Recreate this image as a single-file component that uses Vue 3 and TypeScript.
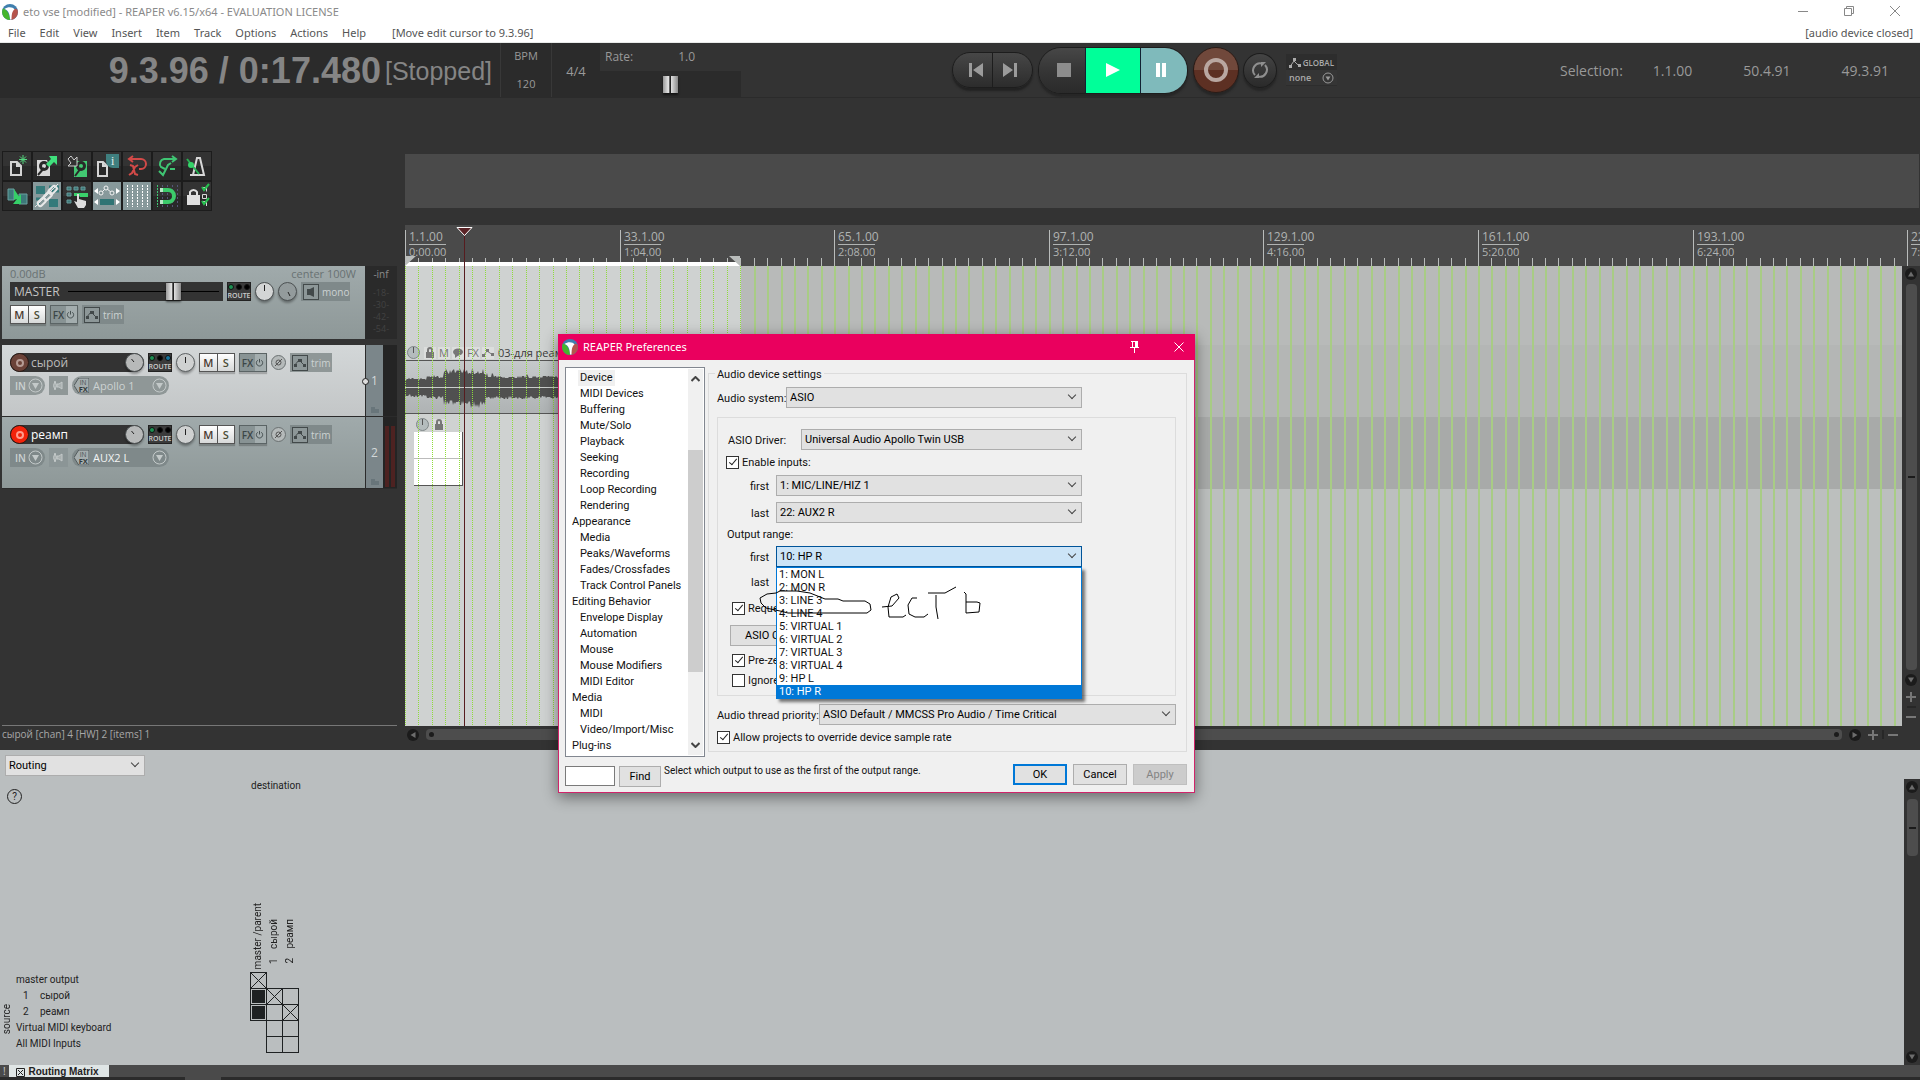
<script setup lang="ts">
import { ref } from 'vue'

const menus = ['File', 'Edit', 'View', 'Insert', 'Item', 'Track', 'Options', 'Actions', 'Help']

interface Track {
  id: number
  name: string
  input: string
  armed: boolean
  selected: boolean
  lights: string[]
}

const tracks: Track[] = [
  { id: 1, name: 'сырой', input: 'Apollo 1', armed: false, selected: true, lights: ['#1d8f52', '#000', '#17759c'] },
  { id: 2, name: 'реамп', input: 'AUX2 L', armed: true, selected: false, lights: ['#1d8f52', '#000', '#000'] }
]

const meterMarks = ['-18-', '-30-', '-42-', '-54-']

/* timeline: 2 bars per minor division, 32 bars per major one */
const BAR_PX = 214.6 / 32
const selectionEnd = 335
const gridLines = Array.from({ length: 113 }, (_, i) => Math.round(i * 2 * BAR_PX))
const majors = Array.from({ length: 8 }, (_, i) => {
  const seconds = i * 64
  return {
    x: Math.round(i * 32 * BAR_PX),
    bar: `${i * 32 + 1}.1.00`,
    time: `${Math.floor(seconds / 60)}:${String(seconds % 60).padStart(2, '0')}.00`
  }
})

function wavePath(): string {
  const top: string[] = []
  const bottom: string[] = []
  let seed = 7
  const rnd = () => {
    seed = (seed * 16807) % 2147483647
    return seed / 2147483647
  }
  for (let x = 0; x <= 335; x++) {
    const loud = x > 38 && x < 81
    const base = x < 22 ? 7 : loud ? 13 : 9
    const up = base + rnd() * (loud ? 5 : 2) + (rnd() > 0.93 ? 3 : 0)
    const down = base + rnd() * (loud ? 5 : 3) + (x > 65 && x < 79 ? 4 * rnd() : 0)
    top.push(`${x} ${Math.round(26 - up)}`)
    bottom.unshift(`${x} ${Math.round(26 + down)}`)
  }
  return `M${top.join('L')}L${bottom.join('L')}Z`
}
const wave = wavePath()

interface Page { label: string; top?: boolean; current?: boolean }
const pages: Page[] = [
  { label: 'Device', current: true },
  { label: 'MIDI Devices' },
  { label: 'Buffering' },
  { label: 'Mute/Solo' },
  { label: 'Playback' },
  { label: 'Seeking' },
  { label: 'Recording' },
  { label: 'Loop Recording' },
  { label: 'Rendering' },
  { label: 'Appearance', top: true },
  { label: 'Media' },
  { label: 'Peaks/Waveforms' },
  { label: 'Fades/Crossfades' },
  { label: 'Track Control Panels' },
  { label: 'Editing Behavior', top: true },
  { label: 'Envelope Display' },
  { label: 'Automation' },
  { label: 'Mouse' },
  { label: 'Mouse Modifiers' },
  { label: 'MIDI Editor' },
  { label: 'Media', top: true },
  { label: 'MIDI' },
  { label: 'Video/Import/Misc' },
  { label: 'Plug-ins', top: true }
]

const outputs = [
  '1: MON L', '2: MON R', '3: LINE 3', '4: LINE 4', '5: VIRTUAL 1',
  '6: VIRTUAL 2', '7: VIRTUAL 3', '8: VIRTUAL 4', '9: HP L', '10: HP R'
]
const output = ref('10: HP R')
const enableInputs = ref(true)
const requestRate = ref(true)
const preZero = ref(true)
const ignoreReset = ref(false)
const allowOverride = ref(true)
const rate = ref(50)
const masterVolume = ref(72)

type Cell = 'none' | 'empty' | 'cross' | 'full'
const matrix: { no?: string; label: string; cells: Cell[] }[] = [
  { label: 'master output', cells: ['cross', 'none', 'none'] },
  { no: '1', label: 'сырой', cells: ['full', 'cross', 'empty'] },
  { no: '2', label: 'реамп', cells: ['full', 'empty', 'cross'] },
  { label: 'Virtual MIDI keyboard', cells: ['none', 'empty', 'empty'] },
  { label: 'All MIDI Inputs', cells: ['none', 'empty', 'empty'] }
]
</script>

<template>
  <div class="app">
    <header class="titlebar">
      <svg class="logo" viewBox="0 0 16 16">
        <circle cx="8" cy="8" r="8" fill="#3f7fae" />
        <path d="M1 4.500C4 5 7.500 9 8 16A8 8 0 0 1 1 4.500Z" fill="#45b52c" />
        <path d="M11.500 5.500C13 4.500 15 4.500 15.700 6.500A8 8 0 0 1 9 16C9 11 9.500 8 11.500 5.500Z" fill="#b5544c" />
        <path d="M2.500 5C6 2.500 11 3 12.500 5.500C10.500 7 9.500 9.500 9.500 15.500L8 15.500C8 10 6 6 2.500 5Z" fill="#fff" />
      </svg>
      <span class="title">eto vse [modified] - REAPER v6.15/x64 - EVALUATION LICENSE</span>
      <div class="winbtns">
        <button aria-label="Minimize"><svg viewBox="0 0 12 12"><path d="M1 6.500H11" /></svg></button>
        <button aria-label="Restore"><svg viewBox="0 0 12 12"><path d="M1.500 3.500H8.500V10.500H1.500ZM3.500 3.500V1.500H10.500V8.500H8.500" /></svg></button>
        <button aria-label="Close"><svg viewBox="0 0 12 12"><path d="M1 1L11 11M11 1L1 11" /></svg></button>
      </div>
    </header>

    <nav class="menubar">
      <a v-for="m in menus" :key="m" href="#">{{ m }}</a>
      <span class="last-action">[Move edit cursor to 9.3.96]</span>
      <span class="device-state">[audio device closed]</span>
    </nav>

    <section class="transport">
      <div class="clock"><b>9.3.96 / 0:17.480</b><span>[Stopped]</span></div>
      <div class="bpm"><span>BPM</span><span>120</span></div>
      <div class="sig">4/4</div>
      <div class="rate">
        <label for="rate"><span>Rate:</span><span>1.0</span></label>
        <input id="rate" v-model="rate" type="range" class="fader" />
      </div>
      <div class="buttons">
        <div class="seek">
          <button aria-label="Go to start"><svg viewBox="0 0 14 14"><path d="M0 0H3V14H0ZM14 0V14L4 7Z" fill="#9b9b9b" /></svg></button>
          <button aria-label="Go to end"><svg viewBox="0 0 14 14"><path d="M14 0H11V14H14ZM0 0V14L10 7Z" fill="#9b9b9b" /></svg></button>
        </div>
        <div class="play-group">
          <button class="stop" aria-label="Stop"><svg viewBox="0 0 14 14"><path d="M0 0H14V14H0Z" fill="#8d8d8d" /></svg></button>
          <button class="play" aria-label="Play"><svg viewBox="0 0 14 14"><path d="M0 0V14L14 7Z" fill="#fff" /></svg></button>
          <button class="pause" aria-label="Pause"><svg viewBox="0 0 14 14"><path d="M2 0H6V14H2ZM8 0H12V14H8Z" fill="#fff" /></svg></button>
        </div>
        <button class="record" aria-label="Record"><i></i></button>
        <button class="repeat" aria-label="Repeat">
          <svg viewBox="0 0 18 18" fill="none" stroke="#8f8f8f" stroke-width="2"><path d="M11 2.500A7 7 0 0 0 4 14M7 15.500A7 7 0 0 0 14 4" /><path d="M3 17H8V12ZM15 1H10V6Z" fill="#8f8f8f" stroke="none" /></svg>
        </button>
        <button class="global">
          <span class="global-top"><svg viewBox="0 0 12 10"><path d="M1 8.500L5 3L8 6L11 8.500" fill="none" stroke="#aaa" /><path d="M0 7H3V10H0ZM4 0H7V3H4ZM9 6H12V9H9Z" fill="#aaa" /></svg>GLOBAL</span>
          <span class="global-mode">none<svg viewBox="0 0 12 12"><circle cx="6" cy="6" r="5" fill="none" stroke="#999" /><path d="M3.500 4.500H8.500L6 8.500Z" fill="#999" /></svg></span>
        </button>
      </div>
      <div class="selection"><span>Selection:</span><span>1.1.00</span><span>50.4.91</span><span>49.3.91</span></div>
    </section>

    <main class="workspace">
      <aside class="panel">
        <div class="toolbar">
          <button aria-label="New project"><svg viewBox="0 0 30 30"><path d="M9 11H15L19 15V24H9ZM15 11V15H19" fill="none" stroke="#d5d5d5" stroke-width="2" /><path d="M21 4V13M17 8.500H25M18 5.500L24 11.500M24 5.500L18 11.500" stroke="#54d67f" /></svg></button>
          <button aria-label="Open project"><svg viewBox="0 0 30 30"><path d="M5 9H15L17 15H18V25H5Z" fill="#d8d8d8" /><circle cx="12" cy="15" r="5" fill="#292929" /><circle cx="12" cy="15" r="2" fill="#d8d8d8" /><path d="M6 24L12 17" stroke="#292929" stroke-width="2" /><path d="M17 5H25V14L22 11L17 16L14 13L19 8Z" fill="#3fe07c" /></svg></button>
          <button aria-label="Save project"><svg viewBox="0 0 30 30"><path d="M12 10H25V26H12Z" fill="#42c972" /><circle cx="19" cy="15" r="5" fill="#292929" /><circle cx="19" cy="15" r="2" fill="#42c972" /><path d="M13 25L19 17" stroke="#292929" stroke-width="2" /><path d="M6 8L9 5L12 9L15 6V15H6L9 12Z" fill="#333" stroke="#ccc" /></svg></button>
          <button aria-label="Project settings"><svg viewBox="0 0 30 30"><path d="M6 11H11L15 15V25H6ZM11 11V15H15" fill="none" stroke="#d5d5d5" stroke-width="2" /><path d="M14 3H27V17H21A7 7 0 0 1 14 10Z" fill="#3f7f7f" /><text x="19" y="14" font-size="12" font-family="Liberation Serif" fill="#e8f0f0">i</text></svg></button>
          <button aria-label="Undo"><svg viewBox="0 0 30 30" fill="none" stroke="#d24a48" stroke-width="2"><path d="M8 8H19A5 5 0 0 1 19 18H17M11 5L7 8L11 11" /><path d="M8 14L11 15L13 23L16 24M16 14L13 16L10 22L7 24" /></svg></button>
          <button aria-label="Redo"><svg viewBox="0 0 30 30" fill="none" stroke="#3fc573" stroke-width="2"><path d="M24 8H12A5 5 0 0 0 9 16L13 18M20 5L24 8L20 11M18 18H23" /><path d="M7 20L11 24L16 14L19 12" /></svg></button>
          <button aria-label="Metronome"><svg viewBox="0 0 30 30"><path d="M11 24L15 7H18L22 24ZM8 24H14" fill="none" stroke="#d8d8d8" stroke-width="2" /><path d="M5 8L17 23" stroke="#27b354" stroke-width="2" /><circle cx="9" cy="14" r="3" fill="#34d469" /></svg></button>
          <button aria-label="Crossfade"><svg viewBox="0 0 30 30"><path d="M6 8H12V19H6Z" fill="#3d7979" stroke="#6aa0a0" /><path d="M17 13H25V23H17Z" fill="#3d7979" stroke="#6aa0a0" /><path d="M12 8L18 17L12 19ZM19 13V23H11Z" fill="#35cf68" /></svg></button>
          <button class="on" aria-label="Item grouping"><svg viewBox="0 0 30 30"><path d="M4 5H13V13H4ZM17 18H26V26H17Z" fill="#347a7a" /><path d="M17 6H27M20 10H27M4 18H10M4 23H8" stroke="#347a7a" stroke-width="3" /><g fill="none" stroke="#e8e8e8" stroke-width="2"><rect x="-4" y="-2" width="9" height="5" rx="2" transform="translate(20 9) rotate(-45)" /><rect x="-4" y="-2" width="9" height="5" rx="2" transform="translate(15 15) rotate(-45)" /><rect x="-4" y="-2" width="9" height="5" rx="2" transform="translate(9 21) rotate(-45)" /></g><path d="M3 26L26 3" stroke="#e8e8e8" /></svg></button>
          <button aria-label="Ripple editing"><svg viewBox="0 0 30 30"><path d="M5 6H9V9H5ZM12 6H16V9H12ZM19 6H23V9H19ZM5 12H9V15H5ZM5 19H9V22H5Z" fill="#3d7979" stroke="#679b9b" /><path d="M12 12H16V15H12ZM15 12H26V16H18Z" fill="#3ad06b" /><path d="M15 13H17V18L24 20V24L22 27H16L12 20L15 21Z" fill="#ddd" /></svg></button>
          <button class="on" aria-label="Move envelopes with items"><svg viewBox="0 0 30 30"><path d="M9 12L14 7L20 12" fill="none" stroke="#f4f4f4" /><g fill="#7f9293" stroke="#f4f4f4"><circle cx="9" cy="12" r="2" /><circle cx="14" cy="7" r="2" /><circle cx="20" cy="12" r="2" /></g><path d="M6 7V13L2 10ZM24 7V13L28 10ZM6 18V24L2 21ZM24 18V24L28 21Z" fill="#fff" /><path d="M8 18H22V24H8Z" fill="#2f7474" /></svg></button>
          <button class="on" aria-label="Grid lines"><svg viewBox="0 0 30 30"><path d="M5.500 4V26M10.500 4V26M15.500 4V26M20.500 4V26M25.500 4V26" stroke="#fff" stroke-dasharray="2 1" /></svg></button>
          <button aria-label="Snapping"><svg viewBox="0 0 30 30"><path d="M5.500 4V26" stroke="#3fc573" stroke-dasharray="2 1" /><path d="M10.500 4V26M15.500 4V26M20.500 4V26M25.500 4V26" stroke="#557" stroke-dasharray="2 2" /><path d="M9 9H16A6 6 0 0 1 16 21H9" fill="none" stroke="#3ccb6b" stroke-width="4" /><path d="M8 7H11V11H8ZM8 19H11V23H8Z" fill="#b9e8c6" /></svg></button>
          <button aria-label="Locking"><svg viewBox="0 0 30 30"><path d="M5 14H18V24H5Z" fill="#e0e0e0" /><path d="M8 14V11A4 4 0 0 1 15 11V14" fill="none" stroke="#e0e0e0" stroke-width="2" /><path d="M20.500 6.500H24.500V10.500M20.500 13.500H24.500V17.500H20.500ZM20.500 20.500H24.500V25" fill="none" stroke="#d8d8d8" /><path d="M20 6L22 9L27 3M20 20L22 23L27 17" fill="none" stroke="#27c04f" stroke-width="2" /></svg></button>
        </div>

        <div class="master">
          <div class="tcp">
            <div class="db"><span>0.00dB</span><span>center 100W</span></div>
            <div class="row">
              <div class="master-name"><label for="mvol">MASTER</label><input id="mvol" v-model="masterVolume" type="range" class="fader line" /></div>
              <button class="route"><span><i style="background: #1d8f52"></i><i></i><i></i></span>ROUTE</button>
              <svg class="knob" viewBox="0 0 19 19"><circle cx="9.500" cy="9.500" r="9" fill="#d3d5d5" stroke="#4c5152" /><path d="M9.500 3V9" stroke="#222" /></svg>
              <svg class="knob" viewBox="0 0 19 19"><circle cx="9.500" cy="9.500" r="9" fill="#939b9c" stroke="#4c5152" /><path d="M10 10L12 14" stroke="#222" /></svg>
              <button class="tag mono"><svg viewBox="0 0 16 16"><rect x="0.500" y="0.500" width="15" height="15" fill="#8d9798" stroke="#42494a" /><path d="M4 5H7L11 3V13L7 11H4Z" fill="#42494a" /></svg>mono</button>
            </div>
            <div class="row">
              <div class="ms"><button>M</button><button>S</button></div>
              <button class="fx"><b>FX</b><svg viewBox="0 0 10 10"><path d="M3 2.500A3.500 3.500 0 1 0 7 2.500M5 1V5" /></svg></button>
              <button class="tag"><svg viewBox="0 0 16 16"><rect x="0.500" y="0.500" width="15" height="15" fill="#8d9798" stroke="#42494a" /><path d="M2 11L7 5L13 11" fill="none" stroke="#42494a" /><path d="M2 9H5V12H2ZM6 4H10V7H6ZM11 9H14V12H11Z" fill="#42494a" /></svg>trim</button>
            </div>
          </div>
          <div class="meter"><span>-inf</span><span v-for="m in meterMarks" :key="m" class="mark">{{ m }}</span></div>
        </div>

        <div v-for="t in tracks" :key="t.id" class="track" :class="{ selected: t.selected }">
          <div class="tcp">
            <div class="row">
              <div class="name" :class="{ armed: t.armed }">
                <button class="arm" aria-label="Record arm"><i></i></button>
                <span>{{ t.name }}</span>
                <svg class="knob" viewBox="0 0 19 19"><circle cx="9.500" cy="9.500" r="9" fill="#b7b9b9" stroke="#4c5152" /><path d="M6.500 6L9 9" stroke="#222" /></svg>
              </div>
              <button class="route"><span><i v-for="(c, n) in t.lights" :key="n" :style="{ background: c }"></i></span>ROUTE</button>
              <svg class="knob" viewBox="0 0 19 19"><circle cx="9.500" cy="9.500" r="9" fill="#cfd1d1" stroke="#5c6162" /><path d="M9.500 4V10" stroke="#222" /></svg>
              <div class="ms"><button>M</button><button>S</button></div>
              <button class="fx"><b>FX</b><svg viewBox="0 0 10 10"><path d="M3 2.500A3.500 3.500 0 1 0 7 2.500M5 1V5" /></svg></button>
              <button class="phase" aria-label="Phase"><svg viewBox="0 0 15 15"><circle cx="7.500" cy="7.500" r="7" fill="#b5baba" stroke="#6a7071" /><circle cx="7.500" cy="7.500" r="2.500" fill="none" stroke="#555" /><path d="M4 11L11 4" stroke="#555" /></svg></button>
              <button class="tag"><svg viewBox="0 0 16 16"><rect x="0.500" y="0.500" width="15" height="15" fill="#8d9798" stroke="#42494a" /><path d="M2 11L7 5L13 11" fill="none" stroke="#42494a" /><path d="M2 9H5V12H2ZM6 4H10V7H6ZM11 9H14V12H11Z" fill="#42494a" /></svg>trim</button>
            </div>
            <div class="row">
              <button class="pill">IN<svg viewBox="0 0 15 15"><circle cx="7.500" cy="7.500" r="6.500" fill="none" stroke="#c3c9c9" /><path d="M4 5H11L7.500 11Z" fill="#c3c9c9" /></svg></button>
              <button class="monitor" aria-label="Monitor"><svg viewBox="0 0 19 19"><path d="M6 5Q9 9.500 6 14Q3 9.500 6 5ZM8 8H10L13 6V13L10 11H8Z" fill="#a9b0b0" stroke="#c3c9c9" /></svg></button>
              <button class="pill input">
                <svg class="infx" viewBox="0 0 16 16"><path d="M5 0H16V16H5L0 8Z" fill="#a5adae" stroke="#50595a" /><text x="6" y="7" font-size="7" font-family="Open Sans" fill="#485051">IN</text><text x="5" y="15" font-size="8" font-weight="700" font-family="Open Sans" fill="#333b3c">FX</text></svg>
                <span>{{ t.input }}</span>
                <svg viewBox="0 0 15 15"><circle cx="7.500" cy="7.500" r="6.500" fill="none" stroke="#c3c9c9" /><path d="M4 5H11L7.500 11Z" fill="#c3c9c9" /></svg>
              </button>
            </div>
          </div>
          <div class="number"><i v-if="t.selected" class="env-dot"></i>{{ t.id }}<svg class="folder" viewBox="0 0 8 6"><path d="M0 0H4V2H8V6H0Z" fill="#68757a" /></svg></div>
          <div class="vu" :class="{ hot: t.armed }"><i></i><i></i></div>
        </div>

        <footer class="status">сырой [chan] 4 [HW] 2 [items] 1</footer>
      </aside>

      <section class="timeline">
        <div class="regions"></div>
        <div class="ruler">
          <svg class="ticks">
            <path v-for="x in gridLines" :key="x" :d="`M${x + 0.5} 33V41`" stroke="#b9bcbb" />
            <path v-for="m in majors" :key="m.x" :d="`M${m.x + 0.5} 5V41`" stroke="#b9bcbb" />
            <rect x="0" y="37" :width="selectionEnd" height="4" fill="#fff" />
            <path d="M0 31H11L0 41ZM335 31H324L335 41Z" fill="#b9bcbb" />
          </svg>
          <div v-for="m in majors" :key="m.bar" class="major" :style="{ left: m.x + 4 + 'px' }">
            <span>{{ m.bar }}</span><span>{{ m.time }}</span>
          </div>
        </div>
        <div class="arrange-row">
          <div class="arrange">
            <div class="lane lane-master"></div>
            <div class="lane"></div>
            <div class="lane lane-dark"></div>
            <div class="lane lane-rest"></div>
            <div class="time-selection"></div>
            <div class="item audio">
              <div class="item-head">
                <svg class="dial" viewBox="0 0 13 13"><circle cx="6.500" cy="6.500" r="6" fill="#b4bcbd" stroke="#7f8788" /><path d="M6.500 1V7" stroke="#555" /></svg>
                <svg viewBox="0 0 12 12"><path d="M2 5H10V11H2Z" fill="#777" /><path d="M4 5V3A2 2 0 0 1 8 3V5" fill="none" stroke="#777" stroke-width="2" /></svg>
                <span>M</span>
                <svg viewBox="0 0 12 12"><ellipse cx="6" cy="5" rx="5" ry="3.500" fill="#777" /><path d="M3 7V11L7 8Z" fill="#777" /></svg>
                <span>FX</span>
                <svg viewBox="0 0 12 12"><path d="M1 9L5 4L11 8" fill="none" stroke="#777" /><path d="M0 7H3V10H0ZM4 2H7V5H4ZM9 6H12V9H9Z" fill="#777" /></svg>
                <b>03-для реамп</b>
              </div>
              <svg class="wave" viewBox="0 0 335 52"><path :d="wave" fill="#505050" /><path d="M0 26.500H335" stroke="#c9cccb" /></svg>
            </div>
            <div class="item midi">
              <div class="item-head">
                <svg class="dial" viewBox="0 0 13 13"><circle cx="6.500" cy="6.500" r="6" fill="#b4bcbd" stroke="#7f8788" /><path d="M6.500 1V7" stroke="#555" /></svg>
                <svg viewBox="0 0 12 12"><path d="M2 5H10V11H2Z" fill="#777" /><path d="M4 5V3A2 2 0 0 1 8 3V5" fill="none" stroke="#777" stroke-width="2" /></svg>
              </div>
              <div class="midi-body"></div>
            </div>
            <svg class="grid">
              <template v-for="x in gridLines" :key="x">
                <line v-if="x <= selectionEnd" :x1="x + 0.5" :x2="x + 0.5" y1="0" y2="100%" stroke="#8fdc3c" stroke-dasharray="1 1" />
                <line v-else :x1="x + 1" :x2="x + 1" y1="0" y2="100%" stroke="#a8cc85" stroke-width="2" />
              </template>
            </svg>
          </div>
          <div class="vscroll">
            <button class="arrow" aria-label="Scroll up"><svg viewBox="0 0 12 12"><path d="M3 8.500H9L6 3.500Z" /></svg></button>
            <div class="thumb"><i></i></div>
            <button class="arrow down" aria-label="Scroll down"><svg viewBox="0 0 12 12"><path d="M3 3.500H9L6 8.500Z" /></svg></button>
            <button class="zoom" aria-label="Zoom in"><svg viewBox="0 0 10 10"><path d="M4 0H6V4H10V6H6V10H4V6H0V4H4Z" /></svg></button>
            <i class="tick"></i>
            <button class="zoom" aria-label="Zoom out"><svg viewBox="0 0 10 10"><path d="M0 4H10V6H0Z" /></svg></button>
          </div>
        </div>
        <div class="hscroll">
          <button class="arrow" aria-label="Scroll left"><svg viewBox="0 0 12 12"><path d="M8.500 3V9L3.500 6Z" /></svg></button>
          <div class="thumb"><i></i><i></i></div>
          <button class="arrow" aria-label="Scroll right"><svg viewBox="0 0 12 12"><path d="M3.500 3V9L8.500 6Z" /></svg></button>
          <button class="zoom" aria-label="Zoom in"><svg viewBox="0 0 10 10"><path d="M4 0H6V4H10V6H6V10H4V6H0V4H4Z" /></svg></button>
          <i class="tick"></i>
          <button class="zoom" aria-label="Zoom out"><svg viewBox="0 0 10 10"><path d="M0 4H10V6H0Z" /></svg></button>
        </div>
        <div class="cursor"><svg viewBox="0 0 17 10"><path d="M1 0.500H16L8.500 8.500Z" fill="#5a2326" stroke="#fff" /></svg></div>
      </section>
    </main>

    <section class="docker">
      <div class="docker-body">
        <div class="combo routing"><select aria-label="Matrix mode"><option>Routing</option></select></div>
        <button class="help">?</button>
        <span class="destination">destination</span>
        <div class="matrix-row">
          <span class="source">source</span>
          <table class="matrix">
            <thead>
              <tr>
                <th></th>
                <th><span>master /parent</span></th>
                <th><span><em>1</em>сырой</span></th>
                <th><span><em>2</em>реамп</span></th>
              </tr>
            </thead>
            <tbody>
              <tr v-for="r in matrix" :key="r.label">
                <th><em v-if="r.no">{{ r.no }}</em>{{ r.label }}</th>
                <td v-for="(c, n) in r.cells" :key="n">
                  <svg viewBox="0 0 17 17">
                    <rect v-if="c !== 'none'" x="0.500" y="0.500" width="16" height="16" fill="none" stroke="#1e2122" />
                    <path v-if="c === 'cross'" d="M1 1L16 16M16 1L1 16" stroke="#1e2122" />
                    <rect v-if="c === 'full'" x="2" y="2" width="13" height="13" fill="#1e2122" />
                  </svg>
                </td>
              </tr>
            </tbody>
          </table>
        </div>
      </div>
      <div class="vscroll dock-scroll">
        <button class="arrow" aria-label="Scroll up"><svg viewBox="0 0 12 12"><path d="M3 8.500H9L6 3.500Z" /></svg></button>
        <div class="thumb"><i></i></div>
        <button class="arrow" aria-label="Scroll down"><svg viewBox="0 0 12 12"><path d="M3 3.500H9L6 8.500Z" /></svg></button>
      </div>
    </section>
    <footer class="tabs">
      <span class="bang">!</span>
      <button class="tab"><svg viewBox="0 0 9 9"><path d="M0.500 0.500H8.500V8.500H0.500ZM2 2L7 7M7 2L2 7" fill="none" stroke="#222" /></svg>Routing Matrix</button>
    </footer>
    <div class="edge"><i></i></div>

    <div class="dialog" role="dialog" aria-label="REAPER Preferences">
      <header class="dlg-title">
        <svg class="logo" viewBox="0 0 16 16">
          <circle cx="8" cy="8" r="8" fill="#3f7fae" />
          <path d="M1 4.500C4 5 7.500 9 8 16A8 8 0 0 1 1 4.500Z" fill="#45b52c" />
          <path d="M11.500 5.500C13 4.500 15 4.500 15.700 6.500A8 8 0 0 1 9 16C9 11 9.500 8 11.500 5.500Z" fill="#b5544c" />
          <path d="M2.500 5C6 2.500 11 3 12.500 5.500C10.500 7 9.500 9.500 9.500 15.500L8 15.500C8 10 6 6 2.500 5Z" fill="#fff" />
        </svg>
        <span>REAPER Preferences</span>
        <button class="pin" aria-label="Pin"><svg viewBox="0 0 11 14"><path d="M2 1.500H9M3.500 1V7" fill="none" stroke="#fff" /><path d="M6 1H9V7H6Z" fill="#fff" /><path d="M1 7.500H10M5.500 8V13" stroke="#fff" /></svg></button>
        <button class="close" aria-label="Close"><svg viewBox="0 0 10 10"><path d="M0.500 0.500L9.500 9.500M9.500 0.500L0.500 9.500" stroke="#fff" /></svg></button>
      </header>
      <div class="dlg-main">
        <div class="tree">
          <ul>
            <li v-for="(p, n) in pages" :key="n" :class="{ top: p.top, current: p.current }"><span>{{ p.label }}</span></li>
          </ul>
          <div class="tree-scroll">
            <svg viewBox="0 0 9 6"><path d="M0.500 5L4.500 1L8.500 5" /></svg>
            <div></div>
            <svg viewBox="0 0 9 6"><path d="M0.500 1L4.500 5L8.500 1" /></svg>
          </div>
        </div>
        <fieldset class="settings">
          <legend>Audio device settings</legend>
          <div class="field system"><label for="sys">Audio system:</label><div class="combo"><select id="sys"><option>ASIO</option></select></div></div>
          <div class="asio">
            <div class="field driver"><label for="drv">ASIO Driver:</label><div class="combo"><select id="drv"><option>Universal Audio Apollo Twin USB</option></select></div></div>
            <label class="check enable"><input v-model="enableInputs" type="checkbox" />Enable inputs:</label>
            <div class="field chan"><label for="in1">first</label><div class="combo"><select id="in1"><option>1: MIC/LINE/HIZ 1</option></select></div></div>
            <div class="field chan"><label for="in2">last</label><div class="combo"><select id="in2"><option>22: AUX2 R</option></select></div></div>
            <p>Output range:</p>
            <div class="field chan out">
              <label for="out1">first</label>
              <div class="combo open">
                <select id="out1" v-model="output"><option v-for="o in outputs" :key="o">{{ o }}</option></select>
                <ul class="options">
                  <li v-for="o in outputs" :key="o" :class="{ active: o === output }" @click="output = o">{{ o }}</li>
                </ul>
              </div>
            </div>
            <div class="field chan out2"><label for="out2">last</label><div class="combo"><select id="out2"></select></div></div>
            <label class="check request"><input v-model="requestRate" type="checkbox" />Reque</label>
            <button class="btn config">ASIO C</button>
            <label class="check prezero"><input v-model="preZero" type="checkbox" />Pre-ze</label>
            <label class="check ignore"><input v-model="ignoreReset" type="checkbox" />Ignore</label>
          </div>
          <div class="field priority"><label for="prio">Audio thread priority:</label><div class="combo"><select id="prio"><option>ASIO Default / MMCSS Pro Audio / Time Critical</option></select></div></div>
          <label class="check override"><input v-model="allowOverride" type="checkbox" />Allow projects to override device sample rate</label>
        </fieldset>
      </div>
      <footer class="dlg-foot">
        <input type="text" aria-label="Find text" class="find" />
        <button class="btn find-btn">Find</button>
        <span class="hint">Select which output to use as the first of the output range.</span>
        <button class="btn ok">OK</button>
        <button class="btn">Cancel</button>
        <button class="btn" disabled>Apply</button>
      </footer>
      <svg class="ink" viewBox="0 0 250 55">
        <path d="M26 18L17 19L10 23L11 28L16 33L30 36L38 38H117L121 35L120 29L115 26H93L88 24H75L60 18L47 16H30Z" />
        <path d="M132 32L142 31L149 23L147 19L141 22L138 32L139 42H153L156 40" />
        <path d="M167 23H162L158 30L159 39L165 42H174L178 39" />
        <path d="M178 18H195L206 12M186 20V32L188 44" />
        <path d="M214 17L216 19V38L229 37L230 28L227 27H216" />
      </svg>
    </div>
  </div>
</template>

<style>
body { margin: 0; background: #333; }
</style>

<style scoped>
* { box-sizing: border-box; }
.app { position: relative; display: flex; flex-direction: column; min-height: 100vh; background: #333; color: #999; font: 12px/16px "Open Sans", "Noto Sans", sans-serif; overflow: hidden; }
button { border: 0; padding: 0; margin: 0; background: none; color: inherit; font: inherit; display: flex; align-items: center; justify-content: center; flex: none; }
svg { display: block; flex: none; }
i { flex: none; }
ul, p { margin: 0; padding: 0; list-style: none; }

.titlebar { display: flex; align-items: center; height: 23px; padding-left: 2px; background: #fff; color: #8a8a8a; }
.logo { width: 16px; height: 16px; }
.title { margin-left: 5px; }
.titlebar .title, .menubar { font: 11px/16px "Noto Sans", sans-serif; }
.winbtns { display: flex; margin-left: auto; padding: 0 2px 2px 0; }
.winbtns button { width: 46px; }
.winbtns svg { width: 12px; height: 12px; fill: none; stroke: #888; }
.menubar { display: flex; align-items: center; height: 20px; padding: 0 7px 0 8px; background: #fff; color: #555; border-bottom: 1px solid #e8eae9; }
.menubar a { color: inherit; text-decoration: none; margin-right: 14px; }
.last-action { margin-left: 12px; }
.device-state { margin-left: auto; }

.transport { display: flex; height: 55px; background: #333; border-bottom: 1px solid #2b2b2b; }
.clock { display: flex; align-items: center; justify-content: flex-end; gap: 4px; width: 501px; padding: 2px 8px 0 0; background: #2b2b2b; border-right: 1px solid #383838; color: #858585; font: 25px/36px "Liberation Sans", Arial, sans-serif; }
.clock b { font-size: 36px; }
.bpm { display: flex; flex-direction: column; justify-content: space-between; align-items: center; width: 51px; padding: 5px 0; background: #2b2b2b; border-right: 1px solid #383838; font-size: 11px; }
.sig { width: 48px; line-height: 56px; height: 54px; text-align: center; background: #2b2b2b; font-size: 13px; }
.rate { width: 141px; font-size: 12px; }
.rate label { display: flex; height: 28px; padding: 6px 46px 0 5px; justify-content: space-between; }
.fader { display: block; appearance: none; margin: 0; background: #2b2b2b; }
.rate .fader { width: 141px; height: 26px; }
.fader::-webkit-slider-thumb { appearance: none; width: 15px; height: 17px; border: 0; background: linear-gradient(90deg, #999, #e2e2e2 35%, #ddd 40%, #222 45%, #222 53%, #ddd 56%, #888); box-shadow: 0 2px 2px #0008; }
.fader.line { flex: 1; min-width: 0; height: 19px; background: linear-gradient(#000, #000) center / 100% 1px no-repeat; }
.buttons { display: flex; align-items: center; margin-left: 211px; }
.seek { display: flex; border: 1px solid #1d1d1d; border-radius: 18px; overflow: hidden; background: linear-gradient(#474747, #2c2c2c); box-shadow: 0 3px 2px #222; }
.seek button { width: 39px; height: 34px; }
.seek button:first-child { width: 40px; border-right: 1px solid #1d1d1d; padding-left: 6px; }
.seek button:last-child { padding-right: 6px; }
.seek svg, .play-group svg { width: 14px; height: 14px; }
.play-group { display: flex; margin-left: 5px; border: 1px solid #1d1d1d; border-radius: 23px; overflow: hidden; box-shadow: 0 3px 2px #262626; }
.play-group button { height: 45px; }
.stop { width: 46px; background: linear-gradient(#474747, #363636 50%, #2a2a2a); padding-left: 3px; }
.play { width: 56px; background: #00ff99; border: solid #123; border-width: 0 1px; }
.pause { width: 46px; background: #7fbabb; padding-right: 6px; }
.record { width: 46px; height: 46px; margin-left: 5px; border: 1px solid #2a1a15; border-radius: 50%; background: linear-gradient(#70483b 50%, #5d3023 50%); box-shadow: 0 3px 2px #262626; }
.record i { width: 24px; height: 24px; border: 4px solid #b9a7a1; border-radius: 50%; }
.repeat { width: 34px; height: 35px; margin-left: 4px; border: 1px solid #1d1d1d; border-radius: 50%; background: linear-gradient(#444, #2a2a2a); box-shadow: 0 3px 2px #262626; }
.repeat svg { width: 18px; height: 18px; }
.global { flex-direction: column; align-items: stretch; margin-left: 9px; width: 51px; height: 32px; background: #2d2d2d; font-size: 9px; font-weight: 600; line-height: 15px; color: #aaa; }
.global-top, .global-mode { display: flex; align-items: center; justify-content: space-between; padding: 0 3px; font-size: 9px; }
.global-top { font-size: 8px; }
.global-mode { background: #353535; }
.global-top svg { width: 12px; height: 10px; }
.global-mode svg { width: 12px; height: 12px; }
.selection { display: flex; align-items: center; margin-left: auto; padding: 2px 31px 0 0; font-size: 14px; }
.selection span:nth-child(2) { margin-left: 30px; }
.selection span:nth-child(n + 3) { margin-left: 51px; }

.workspace { display: flex; flex: 1; min-height: 652px; }
.panel { display: flex; flex-direction: column; width: 405px; flex: none; padding: 53px 8px 0 2px; }
.toolbar { display: grid; grid-template-columns: repeat(7, 30px); width: max-content; margin-bottom: 55px; background: #1c1c1c; }
.toolbar button { height: 30px; background: linear-gradient(#333 50%, #292929 50%); border: 1px solid #1c1c1c; overflow: hidden; }
.toolbar .on { background: #87999b; }
.toolbar svg { width: 30px; height: 30px; }

.master { display: flex; height: 73px; margin-bottom: 6px; }
.tcp { width: 363px; padding: 8px; background: linear-gradient(#a0aaab, #8e9898); }
.master .tcp { padding-top: 0; }
.db { display: flex; justify-content: space-between; padding-right: 1px; color: #697273; font-size: 11px; }
.row { display: flex; align-items: center; gap: 4px; height: 19px; margin-bottom: 4px; }
.master-name { display: flex; align-items: center; width: 213px; height: 19px; padding: 0 4px; gap: 8px; background: #333; color: #c4c4c4; }
.route { flex-direction: column; width: 24px; height: 19px; background: #3b3b3b; border: 1px solid #222; color: #ccc; font-size: 7px; font-weight: 600; line-height: 9px; }
.route span { display: flex; justify-content: space-between; width: 22px; }
.route i { width: 6px; height: 6px; margin: 1px 0; border-radius: 50%; background: #000; border: 1px solid #111; }
.knob { width: 19px; height: 19px; filter: drop-shadow(0 2px 1px #0005); }
.ms { display: flex; width: 36px; height: 19px; border: 1px solid #555; background: linear-gradient(#fff, #d6d8d8); box-shadow: 0 2px 1px #0003; color: #4a3a30; font: 600 11px/17px "Open Sans", sans-serif; }
.ms button { flex: 1; }
.ms button + button { border-left: 1px solid #555; color: #4b4d35; }
.fx { width: 28px; height: 19px; border: 1px solid #5b6465; background: linear-gradient(90deg, #889394 15px, #a3adae 15px); color: #3c4647; box-shadow: 0 2px 1px #0003; gap: 2px; }
.fx b { font-weight: 600; font-size: 10px; }
.fx svg { width: 9px; height: 9px; fill: none; stroke: #3c4647; }
.tag { justify-content: flex-start; gap: 3px; width: 42px; height: 19px; padding-left: 2px; background: #7f898a; color: #ccd2d2; font-size: 10px; }
.tag svg { width: 16px; height: 16px; }
.mono { width: 49px; }
.meter { display: flex; flex-direction: column; align-items: center; width: 32px; background: #2a2a2a; font-size: 10px; color: #8a8a8a; padding-bottom: 4px; }
.meter .mark { color: #424242; line-height: 12px; font-size: 9px; }
.meter span:first-child { margin-bottom: 5px; }

.track { display: flex; height: 72px; border-bottom: 1px solid #2b2b2b; }
.selected .tcp { background: linear-gradient(#d3d7d8, #c3c6c7); }
.name { display: flex; align-items: center; width: 134px; height: 19px; border-radius: 10px; background: #333; color: #bbb; font-size: 12px; }
.name span { flex: 1; padding-left: 2px; }
.name.armed { color: #fff; }
.arm { width: 19px; height: 19px; border: 1px solid #2a1a15; border-radius: 50%; background: #6b4238; }
.arm i { width: 8px; height: 8px; border: 2px solid #b59b94; border-radius: 50%; }
.armed .arm { background: #f2230a; }
.armed .arm i { border-color: #ff9c8c; }
.phase svg { width: 15px; height: 15px; }
.pill { justify-content: space-between; width: 35px; height: 19px; padding: 0 2px 0 5px; border-radius: 0 10px 10px 0; background: #7f898a; color: #ccd2d2; font-weight: 600; font-size: 10px; }
.pill svg { width: 15px; height: 15px; }
.monitor { width: 19px; height: 19px; background: #8b9596; }
.monitor svg { width: 19px; height: 19px; }
.pill.input { width: 97px; padding-left: 2px; border-radius: 10px; font-weight: 400; font-size: 11px; }
.pill.input span { flex: 1; padding-left: 4px; text-align: left; }
.track:not(.selected) .input { color: #f2f4f4; }
.selected .pill, .selected .monitor, .selected .tag { background: #8f9797; }
.number { position: relative; width: 18px; padding-top: 28px; border-left: 1px solid #2b2b2b; background: #7b868a; color: #d3d8d9; text-align: center; }
.folder { position: absolute; right: 4px; bottom: 3px; width: 8px; height: 6px; }
.env-dot { position: absolute; left: -4px; top: 33px; width: 7px; height: 7px; border: 1px solid #222; border-radius: 50%; background: #ddd; }
.vu { display: flex; gap: 2px; width: 14px; padding: 9px 2px 1px; background: #242424; }
.vu i { flex: 1; }
.vu.hot i { background: #4d2221; }
.status { margin-top: auto; height: 25px; border-top: 1px solid #777; font-size: 10px; color: #a8a8a8; line-height: 17px; }

.timeline { position: relative; display: flex; flex-direction: column; flex: 1; min-width: 0; padding-top: 56px; }
.regions { height: 54px; margin-right: 1px; background: #4a4a4a; margin-bottom: 17px; }
.ruler { position: relative; height: 41px; background: #4a4a4a; overflow: hidden; color: #b0b3b2; }
.ticks { width: 100%; height: 41px; }
.major { position: absolute; top: 5px; display: flex; flex-direction: column; }
.major span:first-child { line-height: 14px; }
.major span:last-child { width: 37px; border-top: 1px solid #b0b3b2; font-size: 11px; line-height: 13px; }
.arrange-row { display: flex; flex: 1; }
.arrange { position: relative; display: flex; flex-direction: column; flex: 1; min-width: 0; overflow: hidden; }
.lane { height: 72px; background: #b4b6b5; }
.lane-master { height: 79px; background: #b8bab9; }
.lane-dark { background: #a8aaa9; }
.lane-rest { flex: 1; background: #bcbfbe; }
.time-selection { position: absolute; inset: 0 auto 0 0; width: 336px; background: #cfd2d1; }
.grid { position: absolute; inset: 0; width: 100%; height: 100%; }
.item { position: absolute; }
.item-head { display: flex; align-items: center; gap: 2px; height: 15px; color: #777; font-size: 11px; line-height: 15px; }
.item-head svg { width: 12px; height: 12px; background: #dcdedd; }
.item-head .dial { width: 13px; height: 13px; background: none; margin: 0 2px; }
.item-head span { padding: 0 1px; background: #dcdedd; line-height: 12px; }
.item-head b { font-weight: 400; color: #3a3a3a; padding-left: 2px; }
.audio { left: 0; top: 79px; width: 335px; }
.wave { width: 335px; height: 54px; border: solid #555; border-width: 1px 0; background: linear-gradient(#c5c9ca, #afb3b4); }
.midi { left: 9px; top: 151px; width: 49px; }
.midi-body { height: 54px; background: linear-gradient(#bbb, #bbb) 0 26px / 100% 1px no-repeat #fff; border: solid #555; border-width: 0 1px 1px 0; }
.cursor { position: absolute; left: 59px; top: 135px; bottom: 24px; width: 1px; background: #571c1f; }
.cursor svg { position: absolute; left: -8px; top: -6px; width: 17px; height: 10px; }

.vscroll { display: flex; flex-direction: column; align-items: center; gap: 4px; width: 18px; padding: 2px 0; background: #333; }
.arrow { width: 12px; height: 12px; border-radius: 50%; background: #1b1b1b; }
.arrow.down { margin-bottom: 2px; }
.arrow svg { width: 12px; height: 12px; fill: #6d6d6d; }
.zoom svg { width: 10px; height: 10px; fill: #777; }
.vscroll .thumb { display: flex; align-items: center; justify-content: center; flex: 1; width: 11px; border-radius: 4px; background: #4d4d4d; }
.vscroll .thumb i { width: 7px; height: 2px; background: #1b1b1b; }
.vscroll .tick { width: 9px; height: 2px; background: #272727; }
.arrange-row .vscroll { padding-bottom: 4px; }
.hscroll { display: flex; align-items: center; gap: 7px; height: 24px; padding: 0 22px 7px 2px; }
.hscroll .thumb { display: flex; align-items: center; justify-content: space-between; flex: 1; height: 11px; padding: 0 3px; border-radius: 4px; background: #4d4d4d; }
.hscroll .thumb i { width: 5px; height: 5px; border-radius: 50%; background: #1b1b1b; }
.hscroll .tick { width: 2px; height: 9px; background: #272727; margin: 0 -3px; }

.docker { display: flex; height: 315px; background: #babebf; color: #222; font: 10px/16px Roboto, "Liberation Sans", sans-serif; }
.docker-body { display: flex; flex-direction: column; align-items: flex-start; flex: 1; padding: 5px 0 13px 5px; }
.combo { position: relative; flex: none; }
.combo select { display: block; appearance: none; width: 100%; height: 21px; margin: 0; padding: 1px 20px 0 3px; border: 1px solid #adadad; border-radius: 0; background: #e1e1e1; color: #000; font: 11px/18px Roboto, "Liberation Sans", sans-serif; outline: 0; }
.combo::after { content: ""; position: absolute; right: 7px; top: 5px; width: 5px; height: 5px; border: solid #444; border-width: 0 1px 1px 0; transform: rotate(45deg); }
.routing { width: 140px; }
.destination { margin: -26px 0 0 246px; line-height: 16px; }
.help { width: 15px; height: 15px; margin: 13px 0 0 2px; border: 1px solid #222; border-radius: 50%; }
.matrix-row { display: flex; align-items: flex-end; margin-top: auto; }
.source { writing-mode: vertical-rl; transform: rotate(180deg); width: 11px; line-height: 11px; margin: 0 4px 18px -4px; }
.matrix { border-collapse: separate; border-spacing: 0; }
.matrix th, .matrix td { padding: 0; font-weight: 400; text-align: left; vertical-align: bottom; height: 16px; }
.matrix th:first-child { width: 234px; }
.matrix em { display: inline-block; width: 24px; padding-left: 7px; font-style: normal; }
.matrix td { width: 16px; }
.matrix td svg { width: 17px; height: 17px; margin: 0 -1px -1px 0; }
.matrix thead span { display: block; width: 16px; line-height: 16px; margin-bottom: 3px; writing-mode: vertical-rl; transform: rotate(180deg); white-space: nowrap; }
.matrix thead em { width: auto; height: 20px; padding: 5px 0 0; }
.dock-scroll { width: 16px; margin-top: 29px; gap: 6px; }
.dock-scroll .thumb { flex: none; height: 57px; }
.dock-scroll .arrow:last-child { margin-top: auto; }

.tabs { display: flex; height: 12px; background: #4a4a4a; }
.bang { width: 9px; padding-left: 3px; line-height: 12px; font-size: 10px; color: #ccc; }
.tab { gap: 4px; width: 100px; padding: 2px 4px 0 0; background: #dfe5e5; color: #1f2223; font: 700 10px/12px "Liberation Sans", Arial, sans-serif; }
.tab svg { width: 9px; height: 9px; }
.edge { height: 3px; padding-left: 185px; background: #2b2b2b; }
.edge i { display: block; width: 36px; height: 3px; background: #4a4a4a; }

.dialog { position: absolute; left: 558px; top: 334px; width: 637px; border: 1px solid #d0246a; background: #f0f0f0; color: #111; font: 11px/13px Roboto, "Liberation Sans", sans-serif; box-shadow: 0 4px 14px #0007; }
.dlg-title { display: flex; align-items: center; height: 26px; margin: -1px -1px 0; padding-left: 4px; background: #ea005e; color: #fff; font: 11px/16px "Noto Sans", sans-serif; }
.dlg-title span { margin-left: 5px; }
.pin { margin-left: auto; }
.pin svg { width: 11px; height: 14px; }
.close { margin: 0 11px 0 34px; }
.close svg { width: 10px; height: 10px; }
.dlg-main { display: flex; padding: 7px 7px 0 6px; gap: 3px; }
.tree { display: flex; width: 140px; height: 390px; border: 1px solid #828790; background: #fff; }
.tree ul { flex: 1; padding-top: 2px; }
.tree li { height: 16px; padding-left: 12px; line-height: 16px; }
.tree li.top { padding-left: 4px; }
.tree li span { display: inline-block; padding: 0 2px; }
.tree .current span { background: #f0f0f0; }
.tree-scroll { display: flex; flex-direction: column; align-items: center; justify-content: space-between; width: 15px; margin: 1px; padding: 7px 0; background: #f0f0f0; }
.tree-scroll div { width: 15px; height: 222px; margin-top: 68px; margin-bottom: 70px; background: #cdcdcd; }
.tree-scroll svg { width: 9px; height: 6px; fill: none; stroke: #444; stroke-width: 2; }
.settings { flex: 1; min-width: 0; margin: 0 0 5px; padding: 0 10px 0 8px; border: 1px solid #dcdcdc; }
.settings legend { padding: 1px 2px 0; height: 13px; margin-left: -2px; white-space: nowrap; }
.field { display: flex; align-items: center; height: 21px; white-space: nowrap; }
.field .combo { flex: 1; }
.field > label { padding-top: 1px; }
.system { width: 365px; margin-top: 7px; }
.system label { width: 69px; }
.asio { margin-top: 9px; padding: 11px 93px 8px 8px; border: 1px solid #dcdcdc; display: flex; flex-direction: column; align-items: stretch; }
.driver label { width: 75px; padding-left: 2px; }
.check { display: flex; align-items: center; height: 13px; gap: 3px; white-space: nowrap; }
.check input { appearance: none; position: relative; flex: none; width: 13px; height: 13px; margin: 0; border: 1px solid #333; background: #fff; }
.check input:checked::after { content: ""; position: absolute; left: 4px; top: 0; width: 3px; height: 7px; border: solid #222; border-width: 0 1px 1px 0; transform: rotate(40deg); }
.enable { margin-top: 6px; }
.chan { margin-top: 6px; }
.chan label { width: 50px; padding-right: 7px; text-align: right; }
.asio p { margin-top: 5px; padding-left: 1px; }
.out { margin-top: 5px; }
.out2 { margin-top: 4px; }
.open select { background: #cce4f7; border-color: #005499; }
.options { position: absolute; z-index: 2; left: 0; right: 0; top: 21px; padding: 0; border: 1px solid #0078d7; background: #fff; box-shadow: 3px 3px 3px #0008; }
.options li { height: 13px; padding-left: 2px; line-height: 14px; }
.options .active { background: #0078d7; color: #fff; }
.request { margin: 10px 0 0 6px; }
.btn { width: 54px; height: 21px; border: 1px solid #adadad; background: #e1e1e1; color: #000; }
.btn:disabled { background: #ccc; border-color: #bfbfbf; color: #838383; }
.btn.config { justify-content: flex-start; width: 130px; margin: 10px 0 0 4px; padding-left: 14px; }
.prezero { margin: 8px 0 0 6px; }
.ignore { margin: 7px 0 0 6px; }
.priority { margin-top: 8px; }
.priority label { width: 102px; }
.override { margin-top: 6px; }
.dlg-foot { display: flex; height: 35px; padding: 7px 7px 0 6px; gap: 6px; }
.find { width: 50px; height: 20px; margin: 2px -2px 0 0; border: 1px solid #7a7a7a; background: #fff; }
.find-btn { width: 42px; margin: 2px -3px 0 0; }
.hint { flex: 1; font-size: 10px; }
.btn.ok { border: 2px solid #0078d7; }
.ink { position: absolute; z-index: 3; left: 191px; top: 240px; width: 250px; height: 55px; fill: none; stroke: #000; pointer-events: none; }
</style>
